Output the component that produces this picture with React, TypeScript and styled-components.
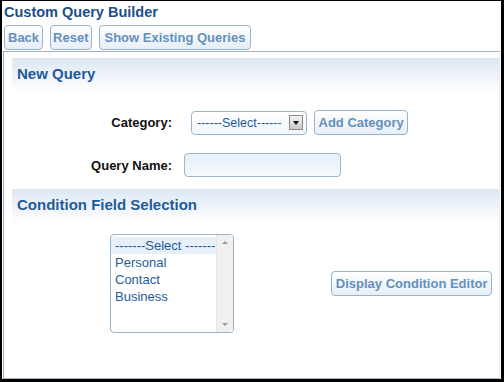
import React from "react";
import styled, { createGlobalStyle } from "styled-components";

const GlobalStyle = createGlobalStyle`
  html, body {
    margin: 0;
    padding: 0;
    background: #000;
  }
  body {
    font-family: "Liberation Sans", Arial, sans-serif;
  }
`;

const Window = styled.div`
  margin: 1px 3px 3px 2px;
  height: 378px;
  background: #fff;
  display: flex;
  flex-direction: column;
  overflow: hidden;
`;

const Title = styled.div`
  font-size: 14.5px;
  font-weight: bold;
  line-height: 18px;
  color: #1b4e8c;
  padding: 2px 0 0 2px;
`;

const Toolbar = styled.div`
  display: flex;
  gap: 7px;
  padding: 4px 0 0 2px;
  height: 25px;
`;

const Button = styled.button<{ $pad?: number }>`
  height: 25px;
  padding: 0 ${(p) => p.$pad ?? 3}px;
  font-family: "Liberation Sans", Arial, sans-serif;
  font-size: 13px;
  font-weight: bold;
  color: #6590bc;
  background: linear-gradient(#ffffff, #e6eef7);
  border: 1px solid #94b4cf;
  border-radius: 4px;
  cursor: pointer;
  white-space: nowrap;
`;

const Panel = styled.div`
  margin: 1px 1px 0 1px;
  flex: 1;
  border: 1px solid #a3b3c0;
  border-right-color: #e4ebf1;
  padding-top: 6px;
`;

const SectionHead = styled.div<{ $top?: number }>`
  margin: ${(p) => p.$top || 0}px 0 0 8px;
  height: 34px;
  padding-left: 5px;
  font-size: 15px;
  font-weight: bold;
  line-height: 32px;
  color: #1f5b99;
  background: linear-gradient(#dce7f2, #ffffff);
`;

const Form = styled.div`
  display: grid;
  grid-template-columns: 168px auto;
  row-gap: 18px;
  column-gap: 12px;
  align-items: center;
  padding-top: 18px;
`;

const Label = styled.div`
  text-align: right;
  font-size: 13px;
  font-weight: bold;
  color: #111;
`;

const FieldRow = styled.div<{ $indent?: number }>`
  display: flex;
  align-items: center;
  gap: 7px;
  padding-left: ${(p) => p.$indent || 0}px;
`;

const SelectBox = styled.div`
  width: 116px;
  height: 24px;
  box-sizing: border-box;
  border: 1px solid #97b5cf;
  border-radius: 4px;
  background: linear-gradient(#ffffff, #f1f6fb);
  display: flex;
  align-items: center;
  justify-content: space-between;
  padding: 0 3px 0 5px;
  font-size: 12.5px;
  color: #1f5b99;
`;

const DropArrow = styled.span`
  width: 14px;
  height: 15px;
  box-sizing: border-box;
  border: 1px solid #8c8c8c;
  background: linear-gradient(#f4f4f4, #c9c9c9);
  display: flex;
  align-items: center;
  justify-content: center;
  &::after {
    content: "";
    border-left: 3px solid transparent;
    border-right: 3px solid transparent;
    border-top: 4px solid #111;
  }
`;

const TextInput = styled.input`
  width: 157px;
  height: 24px;
  box-sizing: border-box;
  border: 1px solid #9ab8d0;
  border-radius: 4px;
  background: linear-gradient(#e6eff8, #f6f9fc);
  outline: none;
`;

const SelectionArea = styled.div`
  display: flex;
  align-items: center;
  padding: 11px 7px 0 106px;
`;

const ListBox = styled.div`
  width: 124px;
  height: 99px;
  box-sizing: border-box;
  border: 1px solid #9ab4cb;
  border-radius: 4px;
  display: flex;
  overflow: hidden;
  background: #fff;
`;

const Options = styled.div`
  flex: 1;
  padding-top: 2px;
`;

const Option = styled.div<{ $selected?: boolean }>`
  font-size: 13px;
  line-height: 17px;
  padding-left: 4px;
  color: #1f5b99;
  white-space: nowrap;
  background: ${(p) => (p.$selected ? "#e7eff8" : "transparent")};
`;

const ScrollBar = styled.div`
  width: 16px;
  flex-shrink: 0;
  background: #f0f0f0;
  border-left: 1px solid #e6e6e6;
  display: flex;
  flex-direction: column;
  justify-content: space-between;
  align-items: center;
  padding: 6px 0;
`;

const ScrollArrow = styled.span<{ $up?: boolean }>`
  border-left: 3px solid transparent;
  border-right: 3px solid transparent;
  ${(p) =>
    p.$up
      ? "border-bottom: 3px solid #9a9a9a;"
      : "border-top: 3px solid #9a9a9a;"}
`;

const EditorButton = styled(Button)`
  margin-left: auto;
`;

export default function App() {
  return (
    <>
      <GlobalStyle />
      <Window>
        <Title>Custom Query Builder</Title>
        <Toolbar>
          <Button $pad={3}>Back</Button>
          <Button $pad={2}>Reset</Button>
          <Button $pad={5}>Show Existing Queries</Button>
        </Toolbar>
        <Panel>
          <SectionHead>New Query</SectionHead>
          <Form>
            <Label>Category:</Label>
            <FieldRow $indent={7}>
              <SelectBox>
                <span>------Select------</span>
                <DropArrow />
              </SelectBox>
              <Button $pad={3.5}>Add Category</Button>
            </FieldRow>
            <Label>Query Name:</Label>
            <FieldRow>
              <TextInput />
            </FieldRow>
          </Form>
          <SectionHead $top={12}>Condition Field Selection</SectionHead>
          <SelectionArea>
            <ListBox>
              <Options>
                <Option $selected>-------Select -------</Option>
                <Option>Personal</Option>
                <Option>Contact</Option>
                <Option>Business</Option>
              </Options>
              <ScrollBar>
                <ScrollArrow $up />
                <ScrollArrow />
              </ScrollBar>
            </ListBox>
            <EditorButton $pad={3.5}>Display Condition Editor</EditorButton>
          </SelectionArea>
        </Panel>
      </Window>
    </>
  );
}
